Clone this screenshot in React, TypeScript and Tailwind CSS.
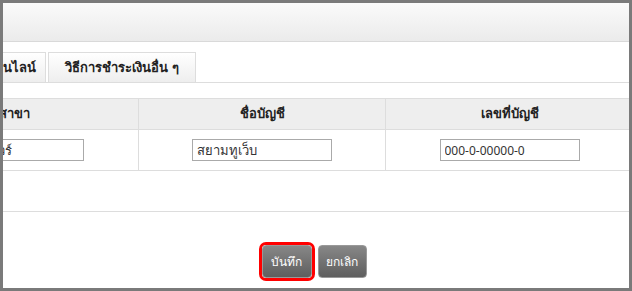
import React from "react";

const font = { fontFamily: 'Tahoma, "Noto Sans", "DejaVu Sans", sans-serif' };

export default function App() {
  return (
    <div
      className="w-[632px] h-[291px] border-[3px] border-[#7a7a7a] bg-white overflow-hidden flex flex-col text-[#333]"
      style={font}
    >
      {/* header */}
      <div className="h-[39px] shrink-0 bg-gradient-to-b from-[#fafafa] to-[#ebebeb] border-b border-[#d9d9d9]" />

      {/* tabs */}
      <div className="h-[41px] shrink-0 pt-[10px] flex items-end border-b border-[#dddddd]">
        <div className="w-[43px] h-[30px] overflow-hidden flex justify-end items-center pr-[9px] border-t border-r border-[#dddddd] bg-gradient-to-b from-[#ffffff] to-[#eeeeee] whitespace-nowrap text-[13px] font-bold text-[#222]">
          ชำระเงินออนไลน์
        </div>
        <div className="ml-[2px] w-[148px] h-[30px] flex justify-center items-center border-t border-x border-[#dddddd] bg-gradient-to-b from-[#ffffff] to-[#eeeeee] whitespace-nowrap text-[13px] font-bold text-[#222]">
          วิธีการชำระเงินอื่น ๆ
        </div>
      </div>

      {/* table */}
      <div className="mt-[15px] shrink-0 -ml-[113px] w-[760px] border-t border-[#dddddd]">
        <div className="grid grid-cols-[249px_247px_247px] h-[31px] bg-[#eeeeee] border-b border-[#dddddd] text-[13px] font-bold text-[#222]">
          <div className="flex items-center justify-center border-r border-[#dddddd]">สาขา</div>
          <div className="flex items-center justify-center border-r border-[#dddddd]">ชื่อบัญชี</div>
          <div className="flex items-center justify-center">เลขที่บัญชี</div>
        </div>
        <div className="grid grid-cols-[249px_247px_247px] h-[41px] border-b border-[#dddddd] text-[12px]">
          <div className="flex items-center justify-center border-r border-[#dddddd]">
            <input
              readOnly
              value="ไอทีสแควร์"
              className="w-[140px] h-[22px] border border-[#aaaaaa] px-[4px] text-[13px] text-[#333] outline-none"
              style={font}
            />
          </div>
          <div className="flex items-center justify-center border-r border-[#dddddd]">
            <input
              readOnly
              value="สยามทูเว็บ"
              className="w-[140px] h-[22px] border border-[#aaaaaa] px-[4px] text-[13px] text-[#333] outline-none"
              style={font}
            />
          </div>
          <div className="flex items-center justify-center">
            <input
              readOnly
              value="000-0-00000-0"
              className="w-[140px] h-[22px] border border-[#aaaaaa] px-[4px] text-[12px] text-[#333] outline-none"
              style={font}
            />
          </div>
        </div>
      </div>

      <div className="h-[41px] shrink-0 border-b border-[#dddddd]" />

      {/* buttons */}
      <div className="flex justify-center gap-[6px] pt-[33px] pr-[4px]">
        <button
          className="w-[50px] h-[33px] rounded-[4px] ring-[3px] ring-[#ff0000] bg-gradient-to-b from-[#878787] to-[#5f5f5f] text-white text-[12px] border border-[#999]"
          style={font}
        >
          บันทึก
        </button>
        <button
          className="w-[49px] h-[33px] rounded-[4px] bg-gradient-to-b from-[#878787] to-[#5f5f5f] text-white text-[12px] border border-[#999]"
          style={font}
        >
          ยกเลิก
        </button>
      </div>
    </div>
  );
}
